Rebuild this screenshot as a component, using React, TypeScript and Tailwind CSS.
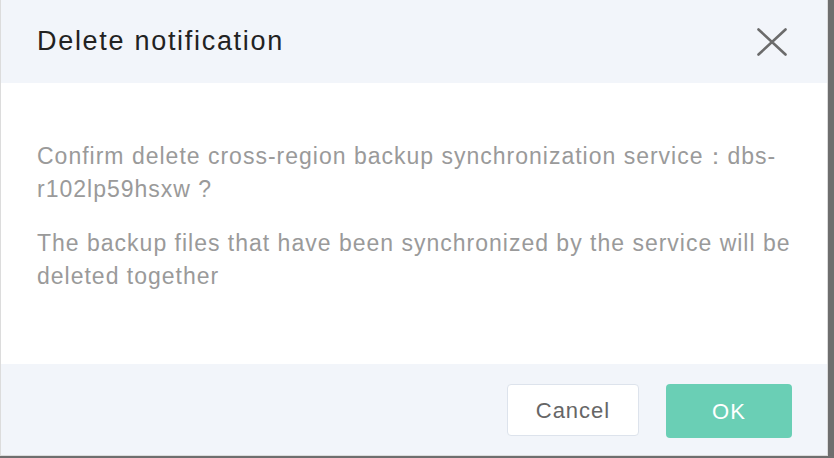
import React from 'react';

const CloseIcon = () => (
  <svg width="30" height="28" viewBox="0 0 30 28" fill="none" className="text-[#6b6b6b]">
    <path d="M1.5 1.5 L28.5 26.5 M28.5 1.5 L1.5 26.5" stroke="currentColor" strokeWidth="2.6" strokeLinecap="round" />
  </svg>
);

const App = () => {
  return (
    <div className="w-[834px] h-[458px] bg-[#6e6e6e] flex items-start" style={{ fontFamily: '"Liberation Sans", Arial, sans-serif' }}>
      <div className="w-[828px] h-[456px] bg-white border-l border-r border-b border-[#dcdcdc] flex flex-col">
        <div className="h-[83px] bg-[#f2f5fa] flex items-center justify-between pl-[36px] pr-[40px]">
          <h1 className="text-[27px] text-[#222] tracking-[1.7px]">Delete notification</h1>
          <CloseIcon />
        </div>

        <div className="h-[281px] pl-[36px] pr-[30px] pt-[57px] text-[23px] leading-[33px] text-[#9a9a9a] tracking-[1px]">
          <p>Confirm delete cross-region backup synchronization service：dbs-r102lp59hsxw ?</p>
          <p className="mt-[21px]">The backup files that have been synchronized by the service will be deleted together</p>
        </div>

        <div className="flex-1 bg-[#f2f5fa] flex items-start justify-end gap-[27px] pt-[20px] pr-[35px]">
          <button className="w-[132px] h-[52px] bg-white border border-[#dde3ec] rounded-[4px] text-[22px] text-[#666] tracking-[1px]">
            Cancel
          </button>
          <button className="w-[126px] h-[54px] bg-[#6acfb5] rounded-[4px] text-[22px] text-white tracking-[1px]">
            OK
          </button>
        </div>
      </div>
    </div>
  );
};

export default App;
